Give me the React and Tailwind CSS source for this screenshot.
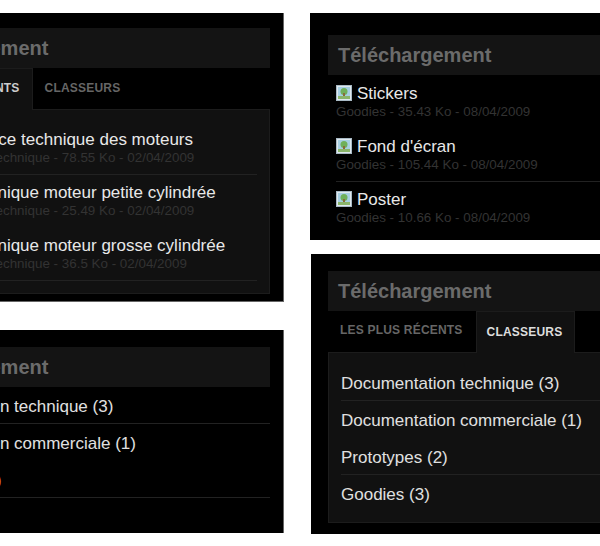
import React from "react";

const recents = [
  { title: "Performance technique des moteurs", meta: "Documentation technique - 78.55 Ko - 02/04/2009", line: true },
  { title: "Fiche technique moteur petite cylindrée", meta: "Documentation technique - 25.49 Ko - 02/04/2009" },
  { title: "Fiche technique moteur grosse cylindrée", meta: "Documentation technique - 36.5 Ko - 02/04/2009", line: true },
];

const goodies = [
  { title: "Stickers", meta: "Goodies - 35.43 Ko - 08/04/2009" },
  { title: "Fond d'écran", meta: "Goodies - 105.44 Ko - 08/04/2009", line: true },
  { title: "Poster", meta: "Goodies - 10.66 Ko - 08/04/2009" },
];

const classeurs = [
  { title: "Documentation technique (3)", line: true },
  { title: "Documentation commerciale (1)" },
  { title: "Prototypes (2)", line: true, hot: true },
  { title: "Goodies (3)" },
];

const ImageIcon = () => (
  <svg width="16" height="16" viewBox="0 0 16 16" className="shrink-0 -mt-[3px]">
    <rect x="0.5" y="0.5" width="15" height="15" fill="#dfe8ee" stroke="#a9bac5" />
    <rect x="2" y="2" width="12" height="12" fill="#a6cfe2" />
    <circle cx="8" cy="6.5" r="3.5" fill="#6fb05a" />
    <rect x="7" y="8" width="2" height="3" fill="#8a6a3a" />
    <path d="M2 14 L2 11 L14 11 L14 14 Z" fill="#8ab56a" />
  </svg>
);

const FileRow = ({ item }) => (
  <div className={`h-[53px] pt-2 ${item.line ? "border-b border-[#222]" : ""}`}>
    <div className="flex items-center h-5 gap-[5px] text-[17px] leading-5 text-[#e8e8e8]">
      <ImageIcon />
      <span className="whitespace-nowrap">{item.title}</span>
    </div>
    <div className="h-4 text-[13.4px] leading-4 text-[#333] whitespace-nowrap">{item.meta}</div>
  </div>
);

const FolderRow = ({ item }) => (
  <div className={`h-[37px] pt-[10px] ${item.line ? "border-b border-[#222]" : ""}`}>
    <div className={`text-[17px] leading-5 whitespace-nowrap ${item.hot ? "text-[#d9703a]" : "text-[#e0e0e0]"}`}>
      {item.title}
    </div>
  </div>
);

const Tabs = ({ active }) => (
  <div className="flex h-[41px] text-[12px] font-bold tracking-[0.2px]">
    <div
      className={`leading-[39px] ${
        active === 0
          ? "pl-[11px] pr-[12px] bg-[#111] border border-b-0 border-[#1c1c1c] text-[#ccc] -mb-px"
          : "pl-3 pr-[13px] text-[#666]"
      }`}
    >
      LES PLUS RÉCENTS
    </div>
    <div
      className={`leading-[41px] ${
        active === 1
          ? "pl-[10px] pr-[12px] bg-[#111] border border-b-0 border-[#1c1c1c] text-[#ddd] -mb-px"
          : "px-3 text-[#666]"
      }`}
    >
      CLASSEURS
    </div>
  </div>
);

const Panel = ({ className, children }) => (
  <div className={`w-[416px] bg-black pr-[13px] overflow-hidden ${className}`}>
    <div className="h-10 bg-[#141414] pl-[10px] text-[20px] font-bold leading-10 text-[#6b6b6b]">Téléchargement</div>
    {children}
  </div>
);

const App = () => {
  return (
    <div className="w-[600px] h-[546px] overflow-hidden bg-white font-['Liberation_Sans',Arial,sans-serif]">
      <div className="flex gap-[26px] -ml-[132px] pt-[13px]">
        {/* Left column */}
        <div className="flex flex-col gap-7 shrink-0">
          <Panel className="h-[289px] pl-[17px] pt-[15px] border-r border-b border-[#666]">
            <Tabs active={0} />
            <div className="bg-[#111] border border-[#1c1c1c] px-3 pt-3 h-[185px]">
              {recents.map((item) => (
                <FileRow key={item.title} item={item} />
              ))}
            </div>
          </Panel>
          <Panel className="h-[203px] pl-[17px] pt-[17px] border-r border-[#666]">
            <div className="pl-[10px]">
              {classeurs.map((item) => (
                <FolderRow key={item.title} item={item} />
              ))}
            </div>
          </Panel>
        </div>

        {/* Right column */}
        <div className="flex flex-col gap-[14px] shrink-0">
          <Panel className="h-[227px] pl-[18px] pt-[22px]">
            <div className="mt-px pl-2">
              {goodies.map((item) => (
                <FileRow key={item.title} item={item} />
              ))}
            </div>
          </Panel>
          <Panel className="h-[280px] pl-[17px] pt-[17px] ml-px">
            <Tabs active={1} />
            <div className="bg-[#111] border border-[#1c1c1c] px-3 pt-[11px] h-[171px]">
              {classeurs.map((item) => (
                <FolderRow key={item.title} item={{ ...item, hot: false }} />
              ))}
            </div>
          </Panel>
        </div>
      </div>
    </div>
  );
};

export default App;
